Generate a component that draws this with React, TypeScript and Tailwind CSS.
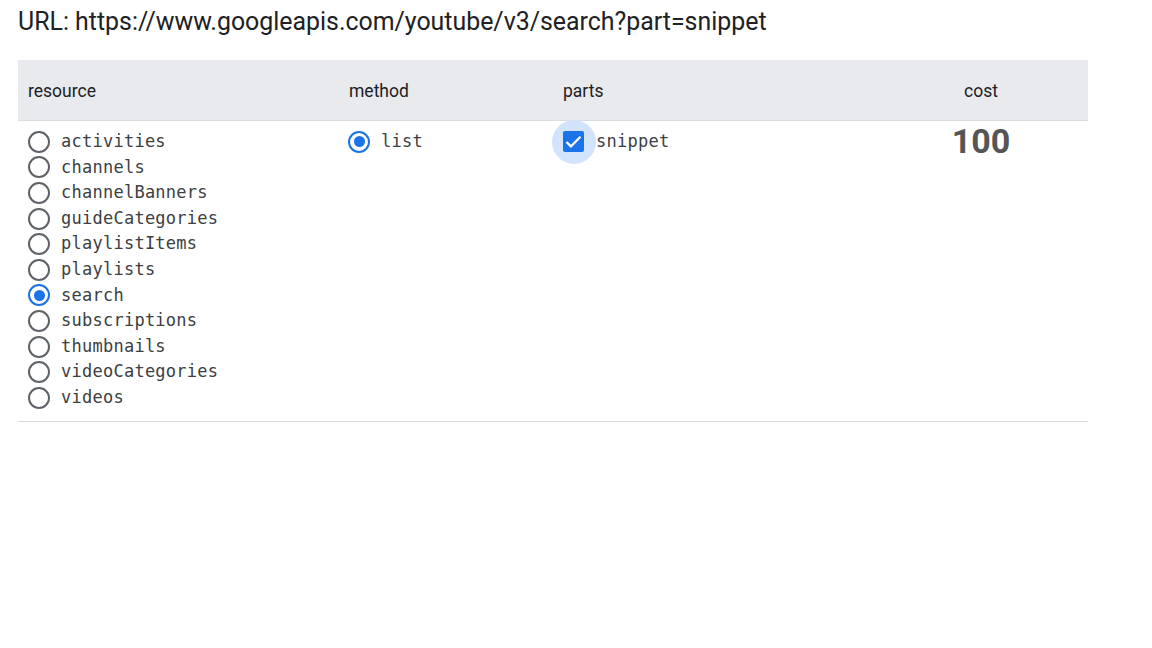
import React from 'react';

const resources = [
  'activities',
  'channels',
  'channelBanners',
  'guideCategories',
  'playlistItems',
  'playlists',
  'search',
  'subscriptions',
  'thumbnails',
  'videoCategories',
  'videos',
];

function Radio({ checked }: { checked: boolean }) {
  return (
    <span
      className={`flex h-[22px] w-[22px] shrink-0 items-center justify-center rounded-full border-2 ${
        checked ? 'border-[#1a73e8]' : 'border-[#5f6368]'
      }`}
    >
      {checked && <span className="h-[11px] w-[11px] rounded-full bg-[#1a73e8]" />}
    </span>
  );
}

function Option({ label, checked }: { label: string; checked: boolean }) {
  return (
    <div className="flex h-[25.6px] items-center">
      <Radio checked={checked} />
      <span className="ml-[11px] font-['DejaVu_Sans_Mono',monospace] text-[17px] tracking-[0.25px] text-[#3c4043]">
        {label}
      </span>
    </div>
  );
}

export default function App() {
  return (
    <div className="min-h-[648px] bg-white font-['Roboto',sans-serif]">
      {/* URL line */}
      <div className="px-[18px] pt-[6px] text-[24.9px] leading-[32px] text-[#202124]">
        URL: https://www.googleapis.com/youtube/v3/search?part=snippet
      </div>

      <div className="mx-[18px] mt-[22px] w-[1070px]">
        {/* Header */}
        <div className="grid h-[61px] grid-cols-[321px_214px_321px_214px] items-center border-b border-[#dadce0] bg-[#e8eaed] pt-[3px] text-[17.5px] text-[#202124]">
          <div className="pl-[10px]">resource</div>
          <div className="pl-[10px]">method</div>
          <div className="pl-[10px]">parts</div>
          <div className="text-center">cost</div>
        </div>

        {/* Body */}
        <div className="grid grid-cols-[321px_214px_321px_214px] border-b border-[#dadce0] pt-[8px] pb-[10px]">
          <div className="pl-[10px]">
            {resources.map((r) => (
              <Option key={r} label={r} checked={r === 'search'} />
            ))}
          </div>
          <div className="pl-[9px]">
            <Option label="list" checked />
          </div>
          <div className="pl-[10px]">
            <div className="flex h-[25.6px] items-center">
              <span className="relative flex h-[21px] w-[21px] shrink-0 items-center justify-center">
                <span className="absolute left-1/2 top-1/2 h-[44px] w-[44px] -translate-x-1/2 -translate-y-1/2 rounded-full bg-[#d2e3fc]" />
                <span className="relative flex h-[21px] w-[21px] items-center justify-center rounded-[2px] bg-[#1a73e8]">
                  <svg viewBox="0 0 24 24" className="h-[21px] w-[21px]" fill="none" stroke="white" strokeWidth="2.6">
                    <path d="M4 12.5l5 5L20 6.5" />
                  </svg>
                </span>
              </span>
              <span className="relative ml-[12px] font-['DejaVu_Sans_Mono',monospace] text-[17px] tracking-[0.25px] text-[#3c4043]">
                snippet
              </span>
            </div>
          </div>
          <div className="flex h-[25.6px] items-center justify-center text-[34px] font-bold text-[#555]">
            100
          </div>
        </div>
      </div>
    </div>
  );
}
